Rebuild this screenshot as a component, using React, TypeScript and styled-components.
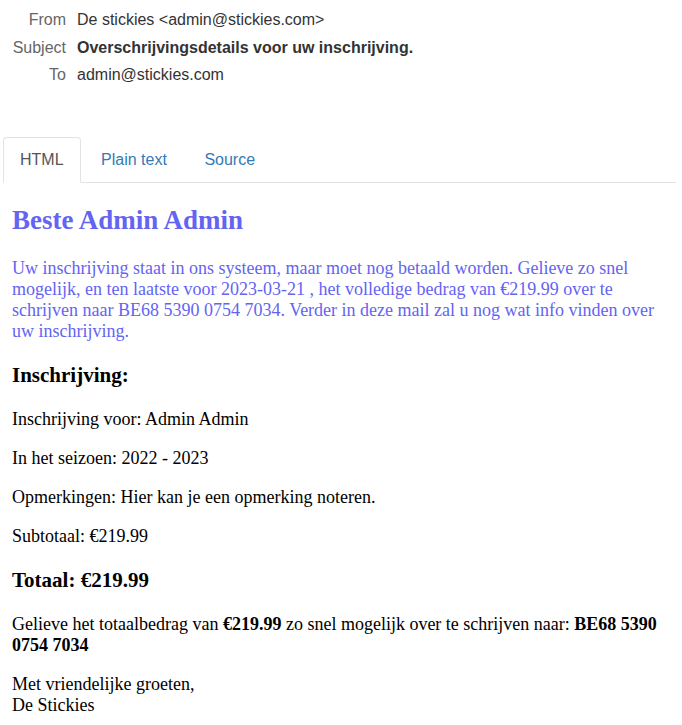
import React from "react";
import styled, { createGlobalStyle } from "styled-components";

const Global = createGlobalStyle`
  html, body { margin: 0; padding: 0; background: #ffffff; }
  body { font-family: "Liberation Sans", Arial, sans-serif; }
  * { box-sizing: border-box; }
`;

const Page = styled.div`
  width: 682px;
  padding: 6px 6px 0 3px;
`;

const Meta = styled.div`
  display: grid;
  grid-template-columns: 63px 1fr;
  column-gap: 11px;
  font-size: 16px;
  line-height: 27.5px;
`;

const MetaLabel = styled.div`
  text-align: right;
  color: #666666;
`;

const MetaValue = styled.div<{ $bold?: boolean }>`
  color: #333333;
  font-weight: ${(p) => (p.$bold ? 700 : 400)};
`;

const Tabs = styled.ul`
  list-style: none;
  margin: 48px 0 0;
  padding: 0;
  display: flex;
  border-bottom: 1px solid #e3e3e3;
`;

const Tab = styled.li<{ $active?: boolean }>`
  margin-right: 3.5px;
  margin-bottom: -1px;
  padding: 10px 16px;
  font-size: 16px;
  line-height: 24px;
  border: 1px solid ${(p) => (p.$active ? "#e3e3e3" : "transparent")};
  border-bottom-color: ${(p) => (p.$active ? "#ffffff" : "transparent")};
  border-radius: 4px 4px 0 0;
  background: ${(p) => (p.$active ? "#ffffff" : "transparent")};
  color: ${(p) => (p.$active ? "#555555" : "#337ab7")};
  cursor: pointer;
`;

const Body = styled.div`
  padding: 0 9px 8px;
  font-family: "Liberation Serif", "Times New Roman", serif;
  font-size: 18px;
  color: #000000;
`;

const Greeting = styled.h2`
  margin: 22px 0;
  font-size: 27px;
  font-weight: 700;
  color: #6464f2;
`;

const Intro = styled.p`
  margin: 18px 0;
  color: #6464f2;
`;

const Section = styled.h3`
  margin: 21px 0;
  font-size: 21px;
  font-weight: 700;
`;

const Para = styled.p`
  margin: 18px 0;
`;

export default function App() {
  return (
    <Page>
      <Global />
      <Meta>
        <MetaLabel>From</MetaLabel>
        <MetaValue>De stickies &lt;admin@stickies.com&gt;</MetaValue>
        <MetaLabel>Subject</MetaLabel>
        <MetaValue $bold>Overschrijvingsdetails voor uw inschrijving.</MetaValue>
        <MetaLabel>To</MetaLabel>
        <MetaValue>admin@stickies.com</MetaValue>
      </Meta>
      <Tabs>
        <Tab $active>HTML</Tab>
        <Tab>Plain text</Tab>
        <Tab>Source</Tab>
      </Tabs>
      <Body>
        <Greeting>Beste Admin Admin</Greeting>
        <Intro>
          Uw inschrijving staat in ons systeem, maar moet nog betaald worden. Gelieve zo snel
          mogelijk, en ten laatste voor 2023-03-21 , het volledige bedrag van €219.99 over te
          schrijven naar BE68 5390 0754 7034. Verder in deze mail zal u nog wat info vinden over
          uw inschrijving.
        </Intro>
        <Section>Inschrijving:</Section>
        <Para>Inschrijving voor: Admin Admin</Para>
        <Para>In het seizoen: 2022 - 2023</Para>
        <Para>Opmerkingen: Hier kan je een opmerking noteren.</Para>
        <Para>Subtotaal: €219.99</Para>
        <Section>Totaal: €219.99</Section>
        <Para>
          Gelieve het totaalbedrag van <b>€219.99</b> zo snel mogelijk over te schrijven naar:{" "}
          <b>BE68 5390 0754 7034</b>
        </Para>
        <Para>
          Met vriendelijke groeten,
          <br />
          De Stickies
        </Para>
      </Body>
    </Page>
  );
}
